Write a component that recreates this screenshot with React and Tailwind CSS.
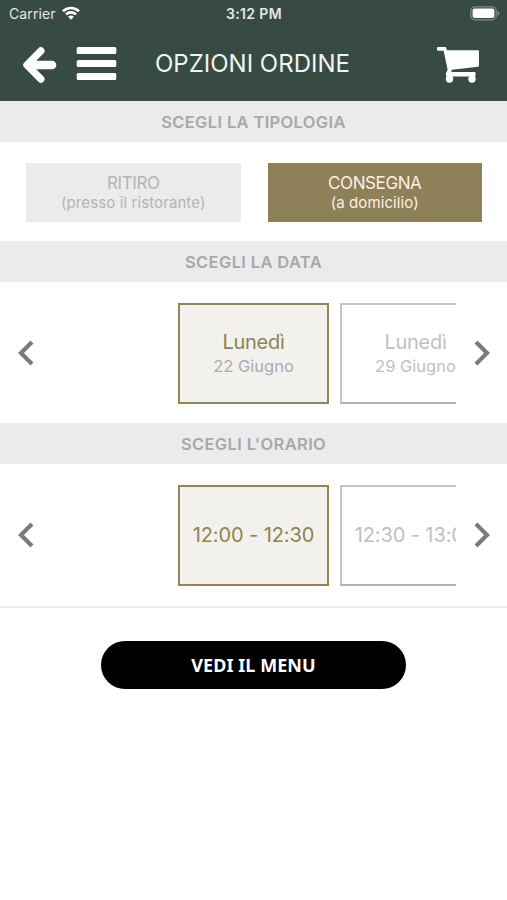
import React from 'react';

const dates = [
  { title: 'Lunedì', subtitle: '22 Giugno' },
  { title: 'Lunedì', subtitle: '29 Giugno' },
];

const times = [{ title: '12:00 - 12:30' }, { title: '12:30 - 13:00' }];

const StatusBar = () => (
  <div className="grid h-7 grid-cols-3 items-center pb-px pl-[9px] pr-[7px]">
    <div className="flex items-center gap-[6px]">
      <span className="text-[14px] tracking-[0.1px] text-[#e3e9e6]">Carrier</span>
      <svg className="mt-[-2px]" width="18" height="14" viewBox="0 0 18 14" fill="none" stroke="currentColor" strokeWidth="2.6">
        <path d="M1 5.3a11.4 11.4 0 0 1 16 0" />
        <path d="M4 8.4a7.1 7.1 0 0 1 10 0" />
        <path d="M9 13.8 6.1 10.8a4.2 4.2 0 0 1 5.800 0z" fill="currentColor" stroke="none" />
      </svg>
    </div>
    <span className="pr-px text-center text-[14px] font-semibold tracking-[0.35px] text-[#e3e9e6]">3:12 PM</span>
    <svg className="justify-self-end" width="30" height="15" viewBox="0 0 30 15">
      <rect x="0.8" y="0.8" width="25.4" height="13" rx="4" fill="none" stroke="#7f8c87" strokeWidth="1.2" />
      <rect x="2.6" y="2.6" width="21.8" height="9.4" rx="2" fill="white" />
      <path d="M27.5 5v4.6c1-.3 1.8-1.2 1.8-2.3s-.8-2-1.8-2.3z" fill="#7f8c87" />
    </svg>
  </div>
);

const Header = () => (
  <header className="h-[101px] bg-[#384a44] text-white">
    <StatusBar />
    <div className="flex h-[72px] items-center pl-[22px] pr-[27px]">
      <svg width="35" height="38" viewBox="0 0 35 38" fill="none" stroke="currentColor" strokeLinecap="round" strokeLinejoin="round">
        <path d="M18.8 6 5 20l13.8 14" strokeWidth="7.4" />
        <path d="M8 20h22" strokeWidth="8.6" />
      </svg>
      <svg className="ml-[19px]" width="41" height="34" viewBox="0 0 41 34" fill="currentColor">
        <rect x="0.7" y="0" width="39.6" height="7" rx="1.5" />
        <rect x="0.7" y="13" width="39.6" height="7" rx="1.5" />
        <rect x="0.7" y="26" width="39.6" height="7" rx="1.5" />
      </svg>
      <h1 className="ml-[38px] text-[24px] whitespace-nowrap text-[#eef5f2]">OPZIONI ORDINE</h1>
      <svg className="ml-auto" width="44" height="38" viewBox="0 0 44 38" fill="currentColor">
        <path d="M2 2h7.800l1.200 3.200H42q1 0 1 1v14.300q0 1-1 1.200L15.800 24.700l-.6 2.800h-4.800l1.200-3L7.600 5.800H2q-1 0-1-1V3q0-1 1-1z" />
        <rect x="10" y="27" width="29.500" height="4.500" rx="1" />
        <circle cx="13.500" cy="34" r="3.700" />
        <circle cx="36" cy="34" r="3.700" />
      </svg>
    </div>
  </header>
);

const SectionTitle = ({ children }) => (
  <h2 className="flex h-[41px] items-center justify-center bg-[#ebebeb] pt-px text-[16.5px] font-semibold tracking-[0.35px] text-[#a7a8aa]">
    {children}
  </h2>
);

const TypeButton = ({ title, subtitle, active }) => (
  <button
    className={`flex h-[59px] flex-1 flex-col items-center justify-center pt-px ${
      active ? 'bg-[#8e8058] text-[#fdf1e2]' : 'bg-[#ebebeb] text-[#b3b4b6]'
    }`}
  >
    <span className="text-[17px] leading-[20px] tracking-[-0.4px]">{title}</span>
    <span className="text-[15px] leading-[19px] tracking-[0.1px]">{subtitle}</span>
  </button>
);

const Chevron = ({ flip }) => (
  <svg
    className={`shrink-0 ${flip ? 'rotate-180' : ''}`}
    width="16"
    height="26"
    viewBox="0 0 16 26"
    fill="none"
    stroke="#7b7b7b"
    strokeWidth="4.2"
  >
    <path d="M14 2 3 13l11 11" />
  </svg>
);

const Slot = ({ title, subtitle, active }) => (
  <div
    className={`flex h-[101px] w-[151px] shrink-0 flex-col items-center justify-center border-2 ${
      active ? 'border-[#928656] bg-[#f3f1ed] text-[#8e8450]' : 'border-[#c4c4c6] border-b-[#b2b2b4] text-[#bfc0c2]'
    }`}
  >
    <span className={`text-[20px] leading-[26px] whitespace-nowrap ${subtitle ? 'tracking-[-0.25px]' : 'tracking-[-0.1px]'}`}>
      {title}
    </span>
    {subtitle && (
      <span className={`text-[16.5px] leading-[22px] ${active ? 'text-[#aaabad]' : ''}`}>{subtitle}</span>
    )}
  </div>
);

const Carousel = ({ slots }) => (
  <div className="flex h-[141px] items-center justify-between pr-[17px] pl-[18px]">
    <Chevron />
    <div className="mr-[18px] ml-auto flex w-[278px] gap-[11px] overflow-hidden pt-px">
      {slots.map((slot, index) => (
        <Slot key={slot.title + index} {...slot} active={index === 0} />
      ))}
    </div>
    <Chevron flip />
  </div>
);

const App = () => {
  return (
    <div className="min-h-[900px] w-full bg-white font-['Inter',sans-serif]">
      <Header />
      <SectionTitle>SCEGLI LA TIPOLOGIA</SectionTitle>
      <div className="flex h-[99px] items-center gap-[27px] pt-px pr-[25px] pl-[26px]">
        <TypeButton title="RITIRO" subtitle="(presso il ristorante)" />
        <TypeButton title="CONSEGNA" subtitle="(a domicilio)" active />
      </div>
      <SectionTitle>SCEGLI LA DATA</SectionTitle>
      <Carousel slots={dates} />
      <SectionTitle>SCEGLI L'ORARIO</SectionTitle>
      <Carousel slots={times} />
      <div className="mt-px h-[2px] bg-[#ececec]" />
      <button className="mx-auto mt-[33px] flex h-[48px] w-[305px] items-center justify-center rounded-full bg-black font-['Noto_Sans',sans-serif] text-[18px] font-bold tracking-[0.05px] text-white">
        VEDI IL MENU
      </button>
    </div>
  );
};

export default App;
